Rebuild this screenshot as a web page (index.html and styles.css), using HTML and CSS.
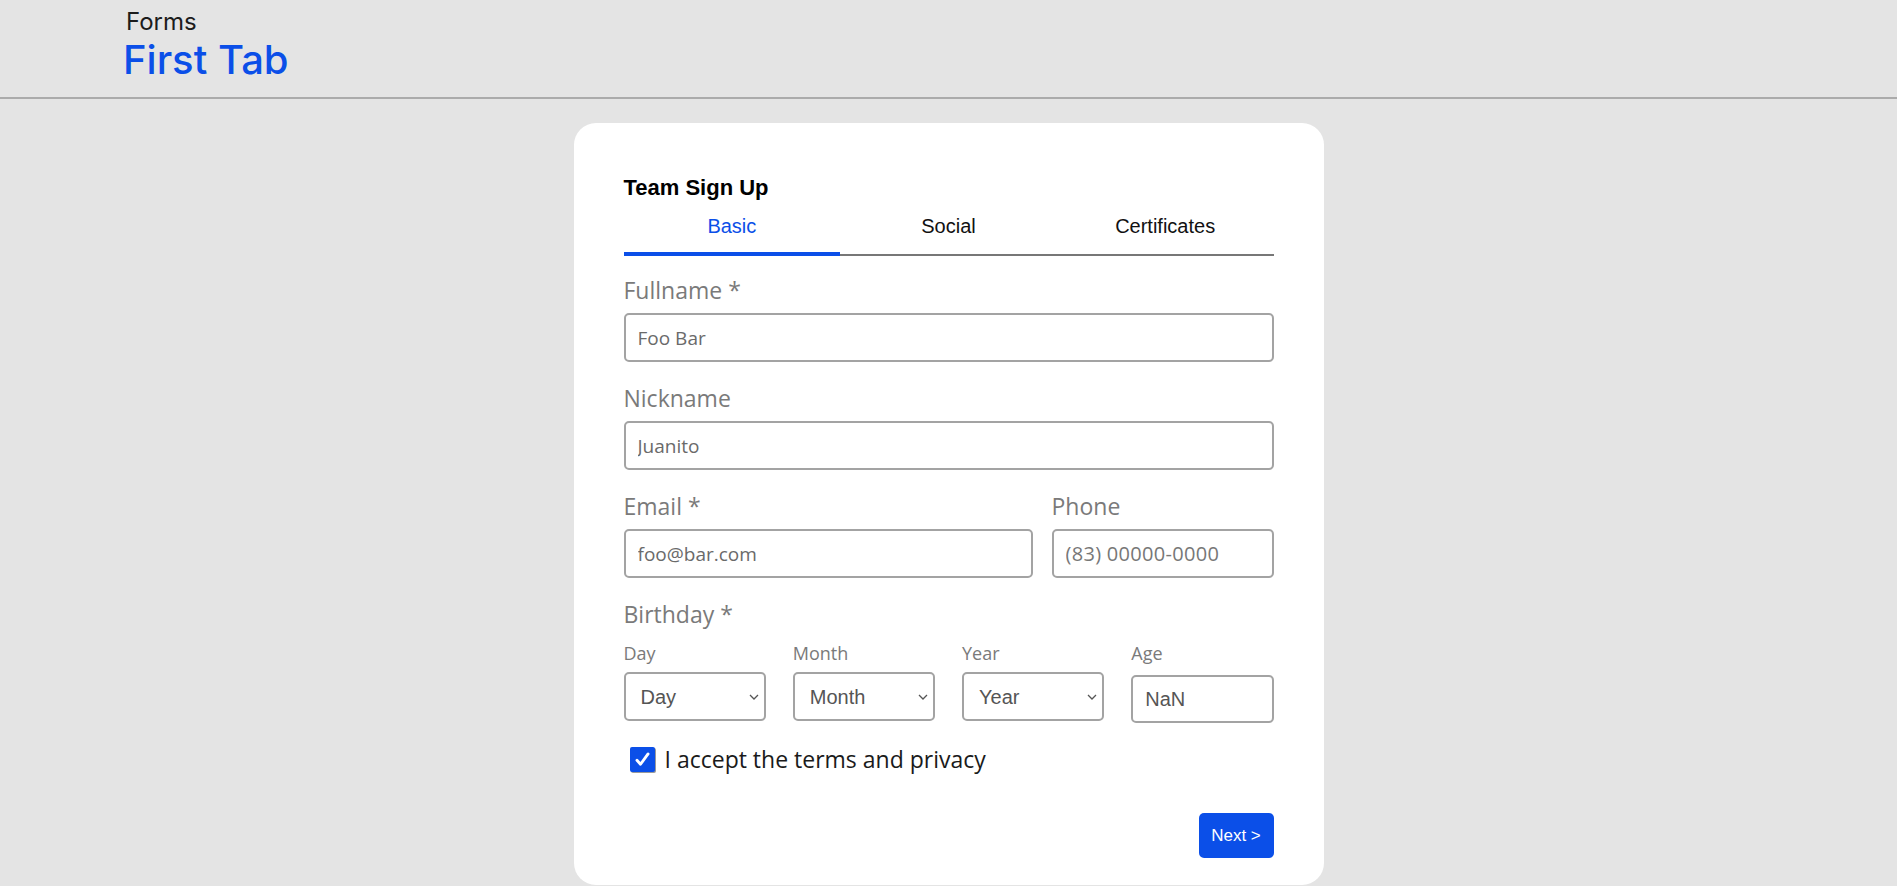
FILE: index.html
```html
<!DOCTYPE html>
<html lang="en">
<head>
<meta charset="utf-8">
<title>Forms - First Tab</title>
<link rel="stylesheet" href="styles.css">
</head>
<body>
<header class="topbar">
  <div class="crumb">Forms</div>
  <h1 class="page-title">First Tab</h1>
</header>
<main class="page">
  <section class="card">
    <h2 class="card-title">Team Sign Up</h2>
    <nav class="tabs">
      <div class="tab active">Basic</div>
      <div class="tab">Social</div>
      <div class="tab">Certificates</div>
    </nav>
    <form class="form">
      <div class="field">
        <label class="label">Fullname *</label>
        <input class="input" type="text" value="Foo Bar">
      </div>
      <div class="field">
        <label class="label">Nickname</label>
        <input class="input" type="text" value="Juanito">
      </div>
      <div class="row-two">
        <div class="field">
          <label class="label">Email *</label>
          <input class="input" type="text" value="foo@bar.com">
        </div>
        <div class="field">
          <label class="label">Phone</label>
          <input class="input phone" type="text" placeholder="(83) 00000-0000">
        </div>
      </div>
      <div class="field">
        <label class="label">Birthday *</label>
        <div class="birth-grid">
          <div class="sub">
            <span class="sub-label">Day</span>
            <div class="select-wrap">
              <select class="select"><option>Day</option></select>
              <svg class="chev" viewBox="0 0 10 6" width="10" height="6"><path d="M1 1l4 4 4-4" fill="none" stroke="#555" stroke-width="1.3"/></svg>
            </div>
          </div>
          <div class="sub">
            <span class="sub-label">Month</span>
            <div class="select-wrap">
              <select class="select"><option>Month</option></select>
              <svg class="chev" viewBox="0 0 10 6" width="10" height="6"><path d="M1 1l4 4 4-4" fill="none" stroke="#555" stroke-width="1.3"/></svg>
            </div>
          </div>
          <div class="sub">
            <span class="sub-label">Year</span>
            <div class="select-wrap">
              <select class="select"><option>Year</option></select>
              <svg class="chev" viewBox="0 0 10 6" width="10" height="6"><path d="M1 1l4 4 4-4" fill="none" stroke="#555" stroke-width="1.3"/></svg>
            </div>
          </div>
          <div class="sub">
            <span class="sub-label">Age</span>
            <input class="age" type="text" value="NaN" readonly>
          </div>
        </div>
      </div>
      <div class="check-row">
        <span class="checkbox"><svg viewBox="0 0 24 24" width="19" height="19"><path d="M5 13l4.5 5L19 5" fill="none" stroke="#fff" stroke-width="3.6" stroke-linecap="round" stroke-linejoin="round"/></svg></span>
        <span class="check-label">I accept the terms and privacy</span>
      </div>
      <div class="actions">
        <button type="button" class="btn">Next &gt;</button>
      </div>
    </form>
  </section>
</main>
</body>
</html>
```

FILE: styles.css
```css
html, body {
  margin: 0;
  padding: 0;
}
body {
  background: #e4e4e4;
  font-family: "Open Sans", "Noto Sans", sans-serif;
}
.topbar {
  padding: 7px 0 14px 123px;
  border-bottom: 2px solid #ababab;
}
.crumb {
  font-family: Inter, sans-serif;
  font-size: 24px;
  line-height: 30px;
  color: #1c1c1c;
  padding-left: 3px;
}
.page-title {
  margin: 0;
  font-family: Inter, sans-serif;
  font-weight: 500;
  font-size: 40px;
  line-height: 46px;
  color: #0b4fe8;
}
.page {
  padding-top: 24px;
}
.card {
  width: 650px;
  margin: 0 auto;
  background: #fff;
  border-radius: 22px;
  padding: 52px 50px 27px;
}
.card-title {
  margin: 0;
  font-family: "Liberation Sans", Arial, sans-serif;
  font-weight: 700;
  font-size: 22px;
  line-height: 25px;
  color: #000;
}
.tabs {
  display: grid;
  grid-template-columns: repeat(3, 1fr);
  border-bottom: 2px solid #777;
}
.tab {
  text-align: center;
  font-family: "Liberation Sans", Arial, sans-serif;
  font-size: 20px;
  line-height: 22px;
  color: #111;
  padding: 15px 0 15px;
  border-bottom: 4px solid transparent;
  margin-bottom: -2px;
}
.tab.active {
  color: #0b4fe8;
  border-bottom-color: #0b4fe8;
}
.form {
  display: flex;
  flex-direction: column;
  gap: 23px;
  margin-top: 21px;
}
.field {
  display: flex;
  flex-direction: column;
}
.label {
  font-size: 23px;
  line-height: 27px;
  color: #7a7a7a;
  margin-bottom: 9px;
}
.input {
  box-sizing: border-box;
  height: 49px;
  border: 2px solid #a3a3a3;
  border-radius: 5px;
  padding: 0 12px;
  font-family: "Open Sans", "Noto Sans", sans-serif;
  font-size: 19px;
  color: #6a6a6a;
  background: #fff;
  outline: none;
}
.input::placeholder {
  color: #777;
}
.phone::placeholder {
  font-size: 20px;
  letter-spacing: 0.3px;
}
.row-two {
  display: grid;
  grid-template-columns: 1fr 222px;
  gap: 19px;
}
.birth-grid {
  display: grid;
  grid-template-columns: repeat(4, 1fr);
  gap: 27px;
  margin-top: 5px;
}
.sub {
  display: flex;
  flex-direction: column;
}
.sub-label {
  font-size: 18px;
  line-height: 22px;
  color: #7a7a7a;
  margin-bottom: 8px;
}
.select-wrap {
  position: relative;
}
.select {
  box-sizing: border-box;
  width: 100%;
  height: 49px;
  appearance: none;
  -webkit-appearance: none;
  border: 2px solid #a3a3a3;
  border-radius: 5px;
  background: #fff;
  padding: 0 17px 0 15px;
  font-family: "Liberation Sans", Arial, sans-serif;
  font-size: 20px;
  color: #555;
  outline: none;
}
.chev {
  position: absolute;
  right: 7px;
  top: 22px;
  pointer-events: none;
}
.age {
  box-sizing: border-box;
  height: 48px;
  margin-top: 3px;
  border: 2px solid #a3a3a3;
  border-radius: 5px;
  padding: 0 12px;
  font-family: "Liberation Sans", Arial, sans-serif;
  font-size: 20px;
  color: #555;
  background: #fff;
  outline: none;
  width: 100%;
}
.check-row {
  display: flex;
  align-items: center;
  gap: 10px;
  padding-left: 6px;
}
.checkbox {
  width: 25px;
  height: 25px;
  border-radius: 2px;
  background: #0b4fe8;
  display: flex;
  align-items: center;
  justify-content: center;
  box-shadow: 1px 1px 0 #9a9a9a;
}
.check-label {
  font-size: 23px;
  line-height: 27px;
  color: #1a1a1a;
}
.actions {
  display: flex;
  justify-content: flex-end;
  margin-top: 17px;
}
.btn {
  width: 75px;
  height: 45px;
  border: none;
  border-radius: 5px;
  background: #0b4fe8;
  color: #fff;
  font-family: "Liberation Sans", Arial, sans-serif;
  font-size: 17px;
  padding: 0;
}
```
